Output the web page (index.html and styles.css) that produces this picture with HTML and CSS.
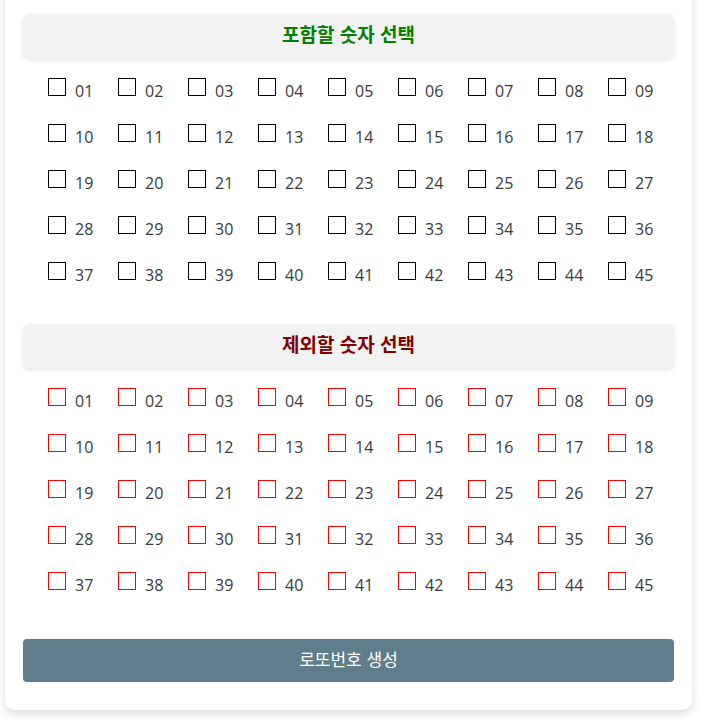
FILE: index.html
```html
<!DOCTYPE html>
<html lang="ko">
<head>
<meta charset="utf-8">
<title>로또번호 생성기</title>
<link rel="stylesheet" href="styles.css">
</head>
<body>
<div class="card">
  <h2 class="section-title include">포함할 숫자 선택</h2>
  <div class="num-grid">
    <label class="num"><input type="checkbox" class="box"><span>01</span></label>
    <label class="num"><input type="checkbox" class="box"><span>02</span></label>
    <label class="num"><input type="checkbox" class="box"><span>03</span></label>
    <label class="num"><input type="checkbox" class="box"><span>04</span></label>
    <label class="num"><input type="checkbox" class="box"><span>05</span></label>
    <label class="num"><input type="checkbox" class="box"><span>06</span></label>
    <label class="num"><input type="checkbox" class="box"><span>07</span></label>
    <label class="num"><input type="checkbox" class="box"><span>08</span></label>
    <label class="num"><input type="checkbox" class="box"><span>09</span></label>
    <label class="num"><input type="checkbox" class="box"><span>10</span></label>
    <label class="num"><input type="checkbox" class="box"><span>11</span></label>
    <label class="num"><input type="checkbox" class="box"><span>12</span></label>
    <label class="num"><input type="checkbox" class="box"><span>13</span></label>
    <label class="num"><input type="checkbox" class="box"><span>14</span></label>
    <label class="num"><input type="checkbox" class="box"><span>15</span></label>
    <label class="num"><input type="checkbox" class="box"><span>16</span></label>
    <label class="num"><input type="checkbox" class="box"><span>17</span></label>
    <label class="num"><input type="checkbox" class="box"><span>18</span></label>
    <label class="num"><input type="checkbox" class="box"><span>19</span></label>
    <label class="num"><input type="checkbox" class="box"><span>20</span></label>
    <label class="num"><input type="checkbox" class="box"><span>21</span></label>
    <label class="num"><input type="checkbox" class="box"><span>22</span></label>
    <label class="num"><input type="checkbox" class="box"><span>23</span></label>
    <label class="num"><input type="checkbox" class="box"><span>24</span></label>
    <label class="num"><input type="checkbox" class="box"><span>25</span></label>
    <label class="num"><input type="checkbox" class="box"><span>26</span></label>
    <label class="num"><input type="checkbox" class="box"><span>27</span></label>
    <label class="num"><input type="checkbox" class="box"><span>28</span></label>
    <label class="num"><input type="checkbox" class="box"><span>29</span></label>
    <label class="num"><input type="checkbox" class="box"><span>30</span></label>
    <label class="num"><input type="checkbox" class="box"><span>31</span></label>
    <label class="num"><input type="checkbox" class="box"><span>32</span></label>
    <label class="num"><input type="checkbox" class="box"><span>33</span></label>
    <label class="num"><input type="checkbox" class="box"><span>34</span></label>
    <label class="num"><input type="checkbox" class="box"><span>35</span></label>
    <label class="num"><input type="checkbox" class="box"><span>36</span></label>
    <label class="num"><input type="checkbox" class="box"><span>37</span></label>
    <label class="num"><input type="checkbox" class="box"><span>38</span></label>
    <label class="num"><input type="checkbox" class="box"><span>39</span></label>
    <label class="num"><input type="checkbox" class="box"><span>40</span></label>
    <label class="num"><input type="checkbox" class="box"><span>41</span></label>
    <label class="num"><input type="checkbox" class="box"><span>42</span></label>
    <label class="num"><input type="checkbox" class="box"><span>43</span></label>
    <label class="num"><input type="checkbox" class="box"><span>44</span></label>
    <label class="num"><input type="checkbox" class="box"><span>45</span></label>
  </div>

  <h2 class="section-title exclude">제외할 숫자 선택</h2>
  <div class="num-grid">
    <label class="num"><input type="checkbox" class="box red"><span>01</span></label>
    <label class="num"><input type="checkbox" class="box red"><span>02</span></label>
    <label class="num"><input type="checkbox" class="box red"><span>03</span></label>
    <label class="num"><input type="checkbox" class="box red"><span>04</span></label>
    <label class="num"><input type="checkbox" class="box red"><span>05</span></label>
    <label class="num"><input type="checkbox" class="box red"><span>06</span></label>
    <label class="num"><input type="checkbox" class="box red"><span>07</span></label>
    <label class="num"><input type="checkbox" class="box red"><span>08</span></label>
    <label class="num"><input type="checkbox" class="box red"><span>09</span></label>
    <label class="num"><input type="checkbox" class="box red"><span>10</span></label>
    <label class="num"><input type="checkbox" class="box red"><span>11</span></label>
    <label class="num"><input type="checkbox" class="box red"><span>12</span></label>
    <label class="num"><input type="checkbox" class="box red"><span>13</span></label>
    <label class="num"><input type="checkbox" class="box red"><span>14</span></label>
    <label class="num"><input type="checkbox" class="box red"><span>15</span></label>
    <label class="num"><input type="checkbox" class="box red"><span>16</span></label>
    <label class="num"><input type="checkbox" class="box red"><span>17</span></label>
    <label class="num"><input type="checkbox" class="box red"><span>18</span></label>
    <label class="num"><input type="checkbox" class="box red"><span>19</span></label>
    <label class="num"><input type="checkbox" class="box red"><span>20</span></label>
    <label class="num"><input type="checkbox" class="box red"><span>21</span></label>
    <label class="num"><input type="checkbox" class="box red"><span>22</span></label>
    <label class="num"><input type="checkbox" class="box red"><span>23</span></label>
    <label class="num"><input type="checkbox" class="box red"><span>24</span></label>
    <label class="num"><input type="checkbox" class="box red"><span>25</span></label>
    <label class="num"><input type="checkbox" class="box red"><span>26</span></label>
    <label class="num"><input type="checkbox" class="box red"><span>27</span></label>
    <label class="num"><input type="checkbox" class="box red"><span>28</span></label>
    <label class="num"><input type="checkbox" class="box red"><span>29</span></label>
    <label class="num"><input type="checkbox" class="box red"><span>30</span></label>
    <label class="num"><input type="checkbox" class="box red"><span>31</span></label>
    <label class="num"><input type="checkbox" class="box red"><span>32</span></label>
    <label class="num"><input type="checkbox" class="box red"><span>33</span></label>
    <label class="num"><input type="checkbox" class="box red"><span>34</span></label>
    <label class="num"><input type="checkbox" class="box red"><span>35</span></label>
    <label class="num"><input type="checkbox" class="box red"><span>36</span></label>
    <label class="num"><input type="checkbox" class="box red"><span>37</span></label>
    <label class="num"><input type="checkbox" class="box red"><span>38</span></label>
    <label class="num"><input type="checkbox" class="box red"><span>39</span></label>
    <label class="num"><input type="checkbox" class="box red"><span>40</span></label>
    <label class="num"><input type="checkbox" class="box red"><span>41</span></label>
    <label class="num"><input type="checkbox" class="box red"><span>42</span></label>
    <label class="num"><input type="checkbox" class="box red"><span>43</span></label>
    <label class="num"><input type="checkbox" class="box red"><span>44</span></label>
    <label class="num"><input type="checkbox" class="box red"><span>45</span></label>
  </div>

  <button class="generate" type="button">로또번호 생성</button>
</div>
</body>
</html>
```

FILE: styles.css
```css
html, body {
  margin: 0;
  padding: 0;
  background: #ffffff;
}

body {
  font-family: "Open Sans", "Noto Sans CJK KR", sans-serif;
  overflow: hidden;
}

.card {
  box-sizing: border-box;
  width: 687px;
  margin: -20px 0 10px 5px;
  padding: 34px 18px 28px 18px;
  background: #ffffff;
  border-radius: 10px;
  box-shadow: 0 4px 10px rgba(0, 0, 0, 0.14);
}

.section-title {
  box-sizing: border-box;
  margin: 0;
  height: 44px;
  padding-bottom: 5px;
  display: flex;
  align-items: center;
  justify-content: center;
  background: #f2f2f2;
  border-radius: 6px;
  box-shadow: 0 2px 5px rgba(0, 0, 0, 0.1);
  font-family: "Noto Sans CJK KR", sans-serif;
  font-size: 19px;
  font-weight: 700;
}

.section-title.include {
  color: #008000;
}

.section-title.exclude {
  color: #800000;
  margin-top: 40px;
}

.num-grid {
  display: grid;
  grid-template-columns: repeat(9, 70px);
  row-gap: 24px;
  margin-top: 20px;
  padding-left: 25px;
}

.num {
  display: flex;
  align-items: flex-start;
  height: 22px;
  font-family: "Open Sans", sans-serif;
  font-size: 16px;
  color: #3a3a3a;
}

.num span {
  line-height: 18px;
  margin-top: 4px;
  margin-left: 9px;
}

.box {
  appearance: none;
  -webkit-appearance: none;
  box-sizing: border-box;
  width: 18px;
  height: 18px;
  margin: 0;
  border: 1px solid #000000;
  background: #ffffff;
  border-radius: 0;
  flex: none;
}

.box.red {
  border-color: #ff0000;
}

.generate {
  display: block;
  box-sizing: border-box;
  width: 100%;
  height: 43px;
  margin-top: 45px;
  padding: 0 0 5px 0;
  border: none;
  border-radius: 4px;
  background: #607d8b;
  color: #ffffff;
  font-family: "Noto Sans CJK KR", sans-serif;
  font-size: 17px;
}
```
